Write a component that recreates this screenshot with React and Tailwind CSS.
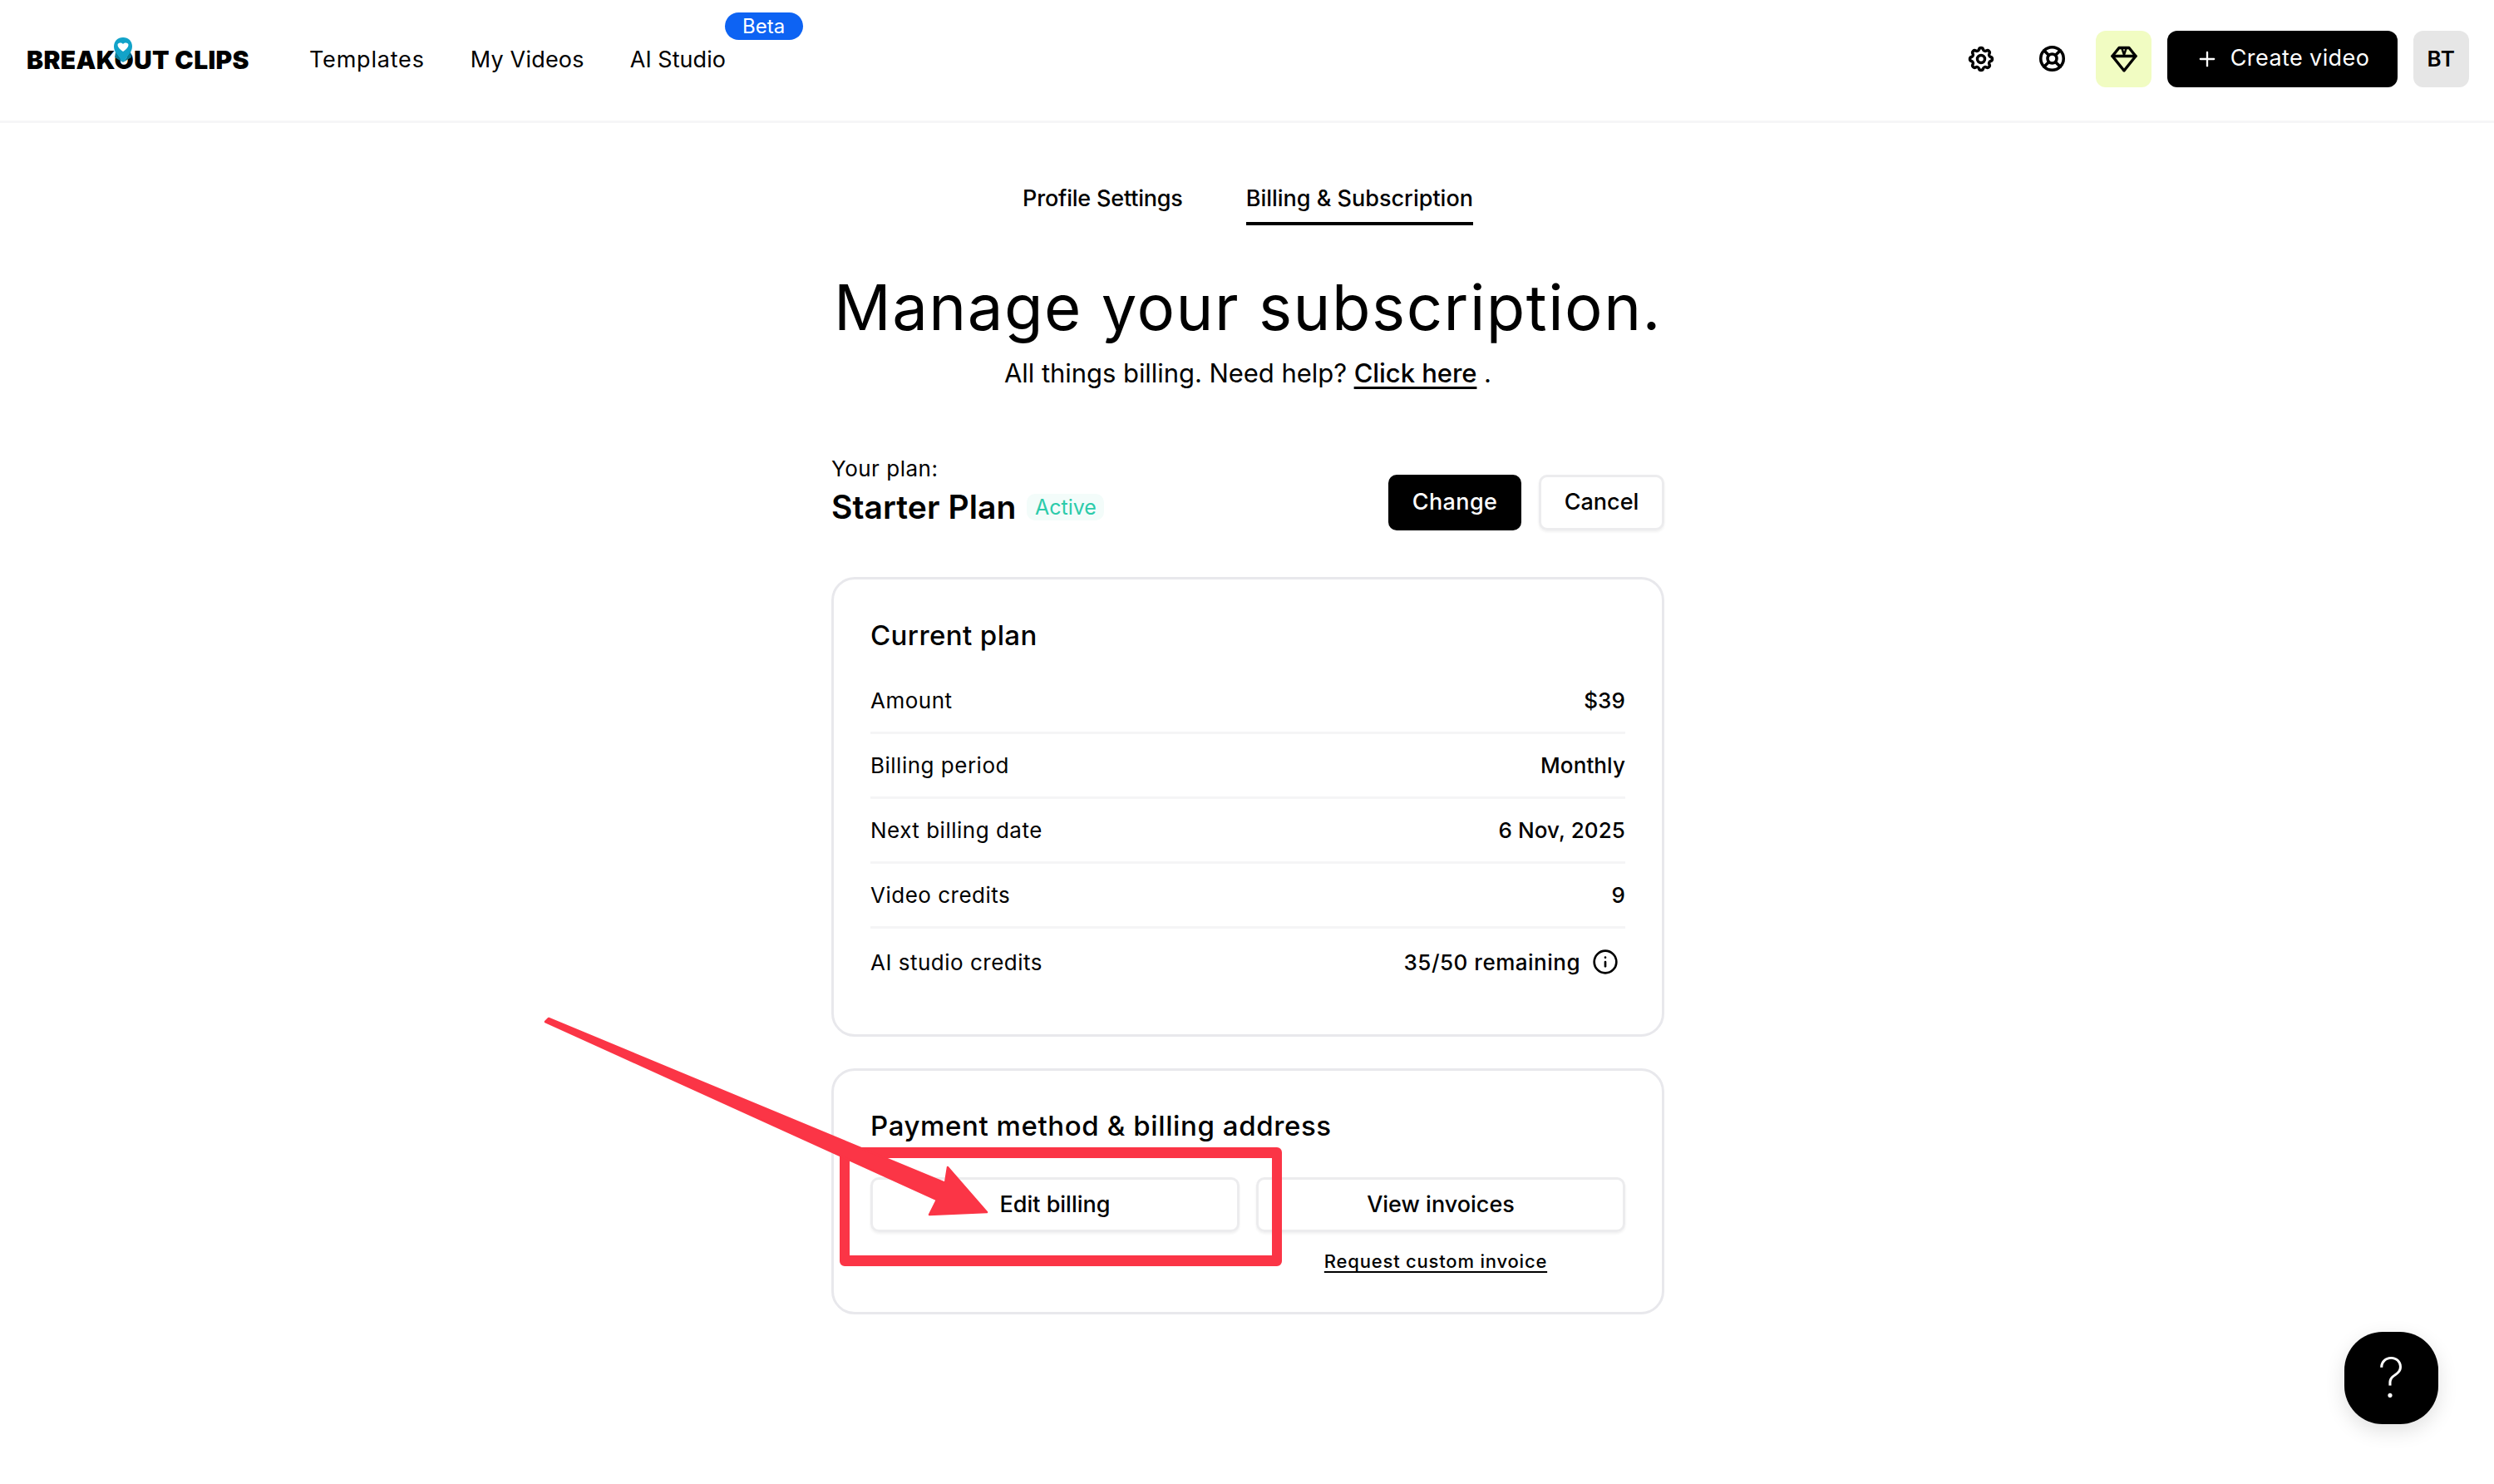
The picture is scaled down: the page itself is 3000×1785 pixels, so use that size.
import React from "react";
import { LifeBuoy, Plus, Info } from "lucide-react";
import { TbSettings } from "react-icons/tb";

function Logo() {
  return (
    <div className="relative w-[268px] h-[44px] flex items-center -translate-y-[1px]">
      <span className="text-[30px] leading-[44px] font-black tracking-[0.35px] whitespace-nowrap text-black">BREAKOUT CLIPS</span>
      <svg className="absolute left-[102px] top-[-6px]" width="28" height="36" viewBox="0 0 28 36">
        <path d="M14 1C20.5 1 25 5.5 25 12C25 18 20 24 14 31C8 24 3 18 3 12C3 5.5 7.500 1 14 1Z" fill="#12a3c9" />
        <path d="M5 18.500C7 22 10 27 14 31C18 27 21 22 23 18.500L24 25L14 31L4 25Z" fill="#0b7a94" />
        <path d="M14 18C10 15 7.500 13 7.500 10C7.500 7.500 11.500 6.500 14 9C16.500 6.500 20.500 7.500 20.500 10C20.500 13 18 15 14 18Z" fill="#fff" />
      </svg>
    </div>
  );
}

function GemIcon() {
  return (
    <svg width="34" height="34" viewBox="0 0 34 34" fill="none" stroke="#000" strokeWidth="3.4" strokeLinejoin="round" strokeLinecap="round">
      <path d="M11 3.500H23L31 13.500L17 31L3 13.500Z" />
      <path d="M3 13.500H31" />
      <path d="M14.500 4.500L17 12L19.500 4.500" strokeWidth="2.400" />
    </svg>
  );
}

function Row({ label, value, last }) {
  return (
    <div className={last ? "h-[80px] flex items-center justify-between" : "h-[78px] flex items-center justify-between border-b-[3px] border-[#f5f5f6]"}>
      <span className="text-[26px] tracking-[0.5px]">{label}</span>
      <span className="flex items-center gap-[14px] text-[26px] font-medium tracking-[0.1px]">{value}</span>
    </div>
  );
}

export default function App() {
  return (
    <div className="relative h-[1785px] w-[3000px] overflow-hidden bg-white text-black font-['Inter',sans-serif]">
      <header className="h-[148px] border-b-[3px] border-[#f6f6f7] flex items-center justify-between pl-[32px] pr-[30px]">
        <div className="flex items-center">
          <Logo />
          <nav className="ml-[72px] flex items-center gap-[55px] text-[27px] font-normal">
            <a className="tracking-[0.8px]">Templates</a>
            <a className="tracking-[0.2px]">My Videos</a>
            <a className="relative tracking-[0.05px] whitespace-nowrap">
              AI Studio
              <span className="absolute left-[114px] top-[-37px] h-[33px] w-[94px] rounded-full bg-[#0d63f3] text-white text-[24px] leading-[33px] text-center">Beta</span>
            </a>
          </nav>
        </div>
        <div className="flex items-center gap-[19px] -translate-y-[2px]">
          <button className="w-[67px] h-[68px] flex items-center justify-center"><TbSettings size={36} strokeWidth={2.3} /></button>
          <button className="w-[67px] h-[68px] flex items-center justify-center"><LifeBuoy size={33} strokeWidth={2.6} /></button>
          <button className="w-[67px] h-[68px] rounded-[12px] bg-[#f1fcc2] flex items-center justify-center"><GemIcon /></button>
          <button className="w-[277px] h-[68px] rounded-[12px] bg-black text-white flex items-center justify-center gap-[14px] text-[27px] tracking-[0.4px]"><Plus size={28} strokeWidth={2} />Create video</button>
          <button className="w-[67px] h-[68px] rounded-[12px] bg-[#e6e6e6] text-[26px] font-semibold tracking-[0.5px]">BT</button>
        </div>
      </header>

      <main className="w-[1002px] ml-[1000px]">
        <div className="pt-[70px] flex justify-center gap-[76px] text-[27px] font-medium">
          <a className="pt-[3px] pb-[14px] leading-[36px] tracking-[-0.2px]">Profile Settings</a>
          <a className="pt-[3px] pb-[10px] leading-[36px] border-b-[4px] border-black">Billing &amp; Subscription</a>
        </div>
        <h1 className="mt-[54px] text-center text-[76px] leading-[88px] font-normal tracking-[1.5px] whitespace-nowrap">Manage your subscription.</h1>
        <p className="mt-[16px] text-center text-[31px] leading-[40px] tracking-[-0.05px]">All things billing. Need help? <a className="underline underline-offset-[5px] font-medium">Click here</a> .</p>

        <div className="mt-[78px] flex items-end justify-between">
          <div className="pb-[4px]">
            <div className="text-[26px] leading-[34px] tracking-[0.5px]">Your plan:</div>
            <div className="mt-[5px] flex items-center gap-[13px]">
              <span className="text-[39px] leading-[48px] font-semibold tracking-[0.1px]">Starter Plan</span>
              <span className="h-[32px] w-[93px] rounded-[10px] bg-[#f3fcfa] text-[#2ccbaa] text-[25px] leading-[32px] text-center">Active</span>
            </div>
          </div>
          <div className="flex items-center gap-[21px]">
            <button className="w-[160px] h-[67px] rounded-[10px] bg-black text-white text-[27px] font-medium tracking-[0.4px]">Change</button>
            <button className="w-[151px] h-[67px] rounded-[10px] border-[3px] border-[#ececee] shadow-[0_2px_3px_rgba(0,0,0,0.06)] text-[27px] font-medium">Cancel</button>
          </div>
        </div>

        <section className="mt-[56px] rounded-[28px] border-[3px] border-[#e8e8ec] pt-[47px] px-[44px] pb-[47px]">
          <h2 className="text-[33px] leading-[40px] font-medium tracking-[0.4px]">Current plan</h2>
          <div className="mt-[21px]">
            <Row label="Amount" value="$39" />
            <Row label="Billing period" value="Monthly" />
            <Row label="Next billing date" value="6 Nov, 2025" />
            <Row label="Video credits" value="9" />
            <Row label="AI studio credits" value={<span className="flex items-center gap-[14px] tracking-[0.5px]">35/50 remaining <Info size={32} strokeWidth={2} className="mr-[8px]" /></span>} last />
          </div>
        </section>

        <section className="mt-[38px] rounded-[28px] border-[3px] border-[#e8e8ec] pt-[46px] px-[44px] pb-[44px]">
          <h2 className="text-[33px] leading-[40px] font-medium tracking-[0.6px] whitespace-nowrap">Payment method &amp; billing address</h2>
          <div className="mt-[42px] grid grid-cols-2 gap-x-[20px]">
            <button className="h-[66px] rounded-[10px] border-[3px] border-[#ececee] shadow-[0_2px_3px_rgba(0,0,0,0.06)] text-[27px] font-medium">Edit billing</button>
            <button className="h-[66px] rounded-[10px] border-[3px] border-[#ececee] shadow-[0_2px_3px_rgba(0,0,0,0.06)] text-[27px] font-medium">View invoices</button>
            <div className="col-start-2 mt-[20px] pr-[12px] text-center leading-[30px]">
              <a className="text-[22px] font-medium tracking-[0.8px] underline underline-offset-[4px]">Request custom invoice</a>
            </div>
          </div>
        </section>
      </main>

      <div className="absolute left-[1010px] top-[1380px] w-[532px] h-[143px] rounded-[6px] border-x-[12px] border-y-[13px] border-[#fb3546]" />
      <svg className="absolute left-0 top-0 pointer-events-none" width="3000" height="1785" viewBox="0 0 3000 1785">
        <path d="M656 1229L660 1225L1137 1423L1140 1404L1187 1458L1118 1461L1127 1443Z" fill="#fb3546" stroke="#fb3546" strokeWidth="2.500" strokeLinejoin="round" />
      </svg>

      <button className="absolute left-[2820px] top-[1602px] w-[113px] h-[111px] rounded-[46px] bg-black text-white text-[66px] font-extralight leading-[111px] text-center shadow-[0_8px_24px_rgba(0,0,0,0.12)]">?</button>
    </div>
  );
}
